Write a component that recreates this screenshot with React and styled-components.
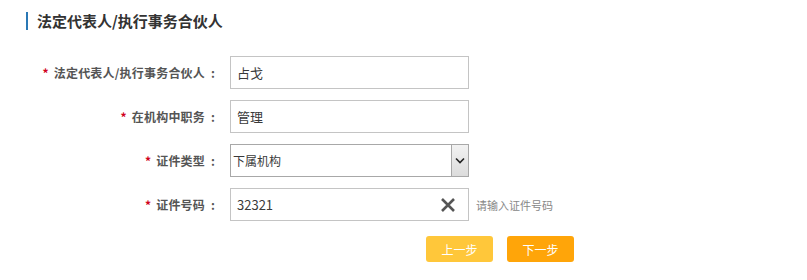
import React from "react";
import styled, { createGlobalStyle } from "styled-components";

const GlobalStyle = createGlobalStyle`
  html, body {
    margin: 0;
    padding: 0;
    background: #fff;
  }
  body {
    font-family: "Noto Sans CJK SC", "Noto Sans", sans-serif;
  }
`;

const Page = styled.div`
  width: 807px;
  height: 280px;
  box-sizing: border-box;
  padding-top: 12px;
`;

const Title = styled.h2`
  margin: 0 0 0 26px;
  padding-left: 9px;
  border-left: 2px solid #2a78b5;
  height: 18px;
  line-height: 18px;
  font-size: 15px;
  font-weight: bold;
  color: #333;
`;

const Form = styled.div`
  display: grid;
  grid-template-columns: 218px 239px auto;
  grid-auto-rows: 33px;
  column-gap: 12px;
  row-gap: 11px;
  margin-top: 26px;
`;

const Label = styled.label`
  display: flex;
  align-items: center;
  justify-content: flex-end;
  font-size: 12px;
  font-weight: bold;
  color: #555;
  letter-spacing: 0.2px;
  white-space: nowrap;
`;

const Star = styled.span`
  color: #d0021b;
  margin-right: 5px;
`;

const Colon = styled.span`
  display: inline-block;
  width: 6px;
  margin: 0 2px 0 5px;
  text-align: center;
`;

const Field = styled.div`
  position: relative;
  display: flex;
  align-items: center;
  box-sizing: border-box;
  border: 1px solid ${(p) => (p.$select ? "#a8a8a8" : "#c4c4c4")};
  background: #fff;
  padding-left: ${(p) => (p.$select ? "2px" : "6px")};
  font-size: ${(p) => (p.$select ? "12px" : "13px")};
  color: #3a3a3a;
`;

const Arrow = styled.div`
  position: absolute;
  top: 0;
  right: 0;
  bottom: 0;
  width: 16px;
  border-left: 1px solid #a8a8a8;
  background: linear-gradient(#f2f2f2, #dcdcdc);
  display: flex;
  align-items: center;
  justify-content: center;
`;

const Clear = styled.div`
  position: absolute;
  right: 12px;
  top: 8px;
  width: 16px;
  height: 16px;
`;

const Hint = styled.div`
  display: flex;
  align-items: center;
  margin-left: -5px;
  font-size: 11px;
  color: #888;
`;

const Buttons = styled.div`
  display: flex;
  gap: 14px;
  padding-left: 426px;
  margin-top: 15px;
`;

const Button = styled.button`
  width: 67px;
  height: 26px;
  border: none;
  border-radius: 3px;
  background: ${(p) => (p.$primary ? "#ffa509" : "#ffc73a")};
  color: #fff;
  font-family: "Noto Sans CJK SC", sans-serif;
  font-size: 12px;
  padding: 0;
`;

const Row = ({ label, children, hint }) => (
  <>
    <Label>
      <Star>*</Star>
      {label}
      <Colon>:</Colon>
    </Label>
    {children}
    {hint ? <Hint>{hint}</Hint> : <div />}
  </>
);

export default function App() {
  return (
    <Page>
      <GlobalStyle />
      <Title>法定代表人/执行事务合伙人</Title>
      <Form>
        <Row label="法定代表人/执行事务合伙人">
          <Field>占戈</Field>
        </Row>
        <Row label="在机构中职务">
          <Field>管理</Field>
        </Row>
        <Row label="证件类型">
          <Field $select>
            下属机构
            <Arrow>
              <svg width="10" height="7" viewBox="0 0 10 7">
                <path d="M1 1.5 L5 5.5 L9 1.5" fill="none" stroke="#222" strokeWidth="1.6" />
              </svg>
            </Arrow>
          </Field>
        </Row>
        <Row label="证件号码" hint="请输入证件号码">
          <Field>
            32321
            <Clear>
              <svg width="16" height="16" viewBox="0 0 16 16">
                <path d="M2 2 L14 14 M14 2 L2 14" stroke="#555" strokeWidth="2.6" />
              </svg>
            </Clear>
          </Field>
        </Row>
      </Form>
      <Buttons>
        <Button>上一步</Button>
        <Button $primary>下一步</Button>
      </Buttons>
    </Page>
  );
}
